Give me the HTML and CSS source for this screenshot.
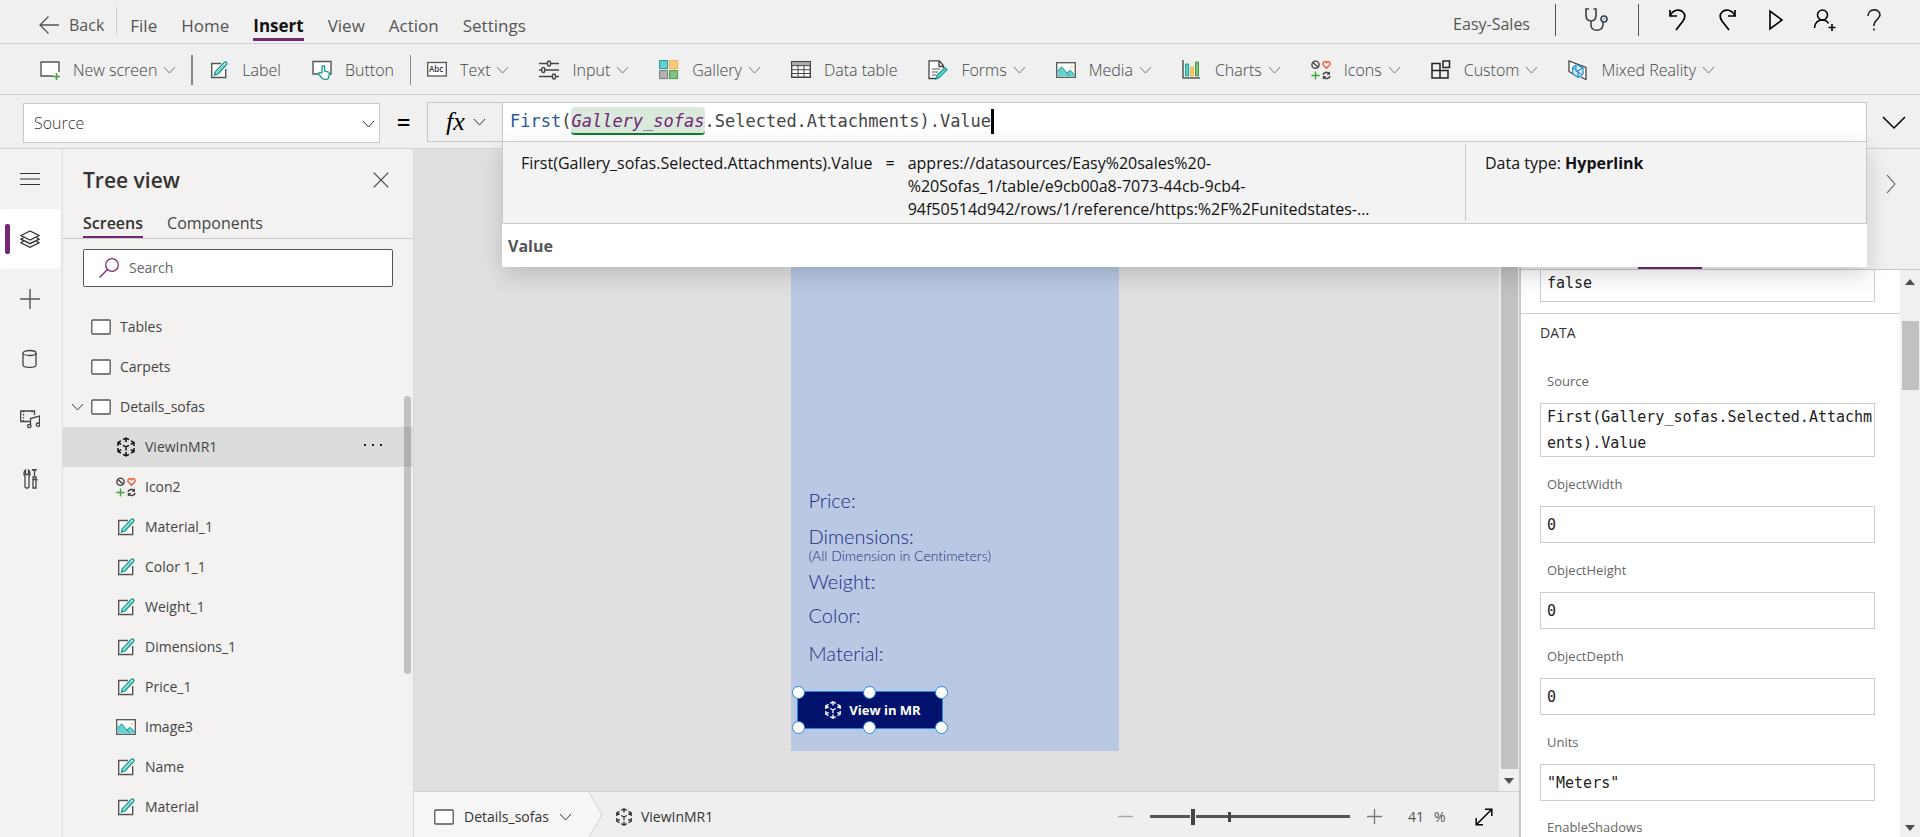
FILE: index.html
```html
<!DOCTYPE html>
<html lang="en">
<head>
<meta charset="utf-8">
<title>Easy-Sales</title>
<link rel="stylesheet" href="styles.css">
</head>
<body>
<svg class="defs" aria-hidden="true">
  <symbol id="chev" viewBox="0 0 12 8"><path d="M.5 1 6 7 11.500 1" fill="none" stroke="currentColor"/></symbol>
  <symbol id="screen" viewBox="0 0 20 16"><rect x=".8" y="1" width="18.400" height="14" rx="1" fill="#fff" stroke="#555" stroke-width="1.300"/></symbol>
  <symbol id="edit" viewBox="0 0 20 20"><path d="M12 3.500H2.700v14h14V9" fill="#fff" stroke="#555" stroke-width="1.400"/><path d="M5.500 15 6.500 11.500 15.300 2.400q1.300-1 2.200 0t0 2.200L9 13.800Z" fill="#fff" stroke="#0f9b94" stroke-width="1.400"/><path d="m7.500 13 8-8.300" stroke="#0f9b94" fill="none" stroke-width=".8"/></symbol>
  <symbol id="cube" viewBox="0 0 20 20"><path fill="none" stroke="currentColor" stroke-width="1.500" d="M7 2.700 10 1l3 1.700M10 1v4M15 3.800l3 1.700V9M18 5.500 14.800 7.300M18 11v3.500l-3 1.700M18 14.500l-3.200-1.800M13 17.300 10 19l-3-1.700M10 19v-4M5 16.200l-3-1.700V11M2 14.500l3.200-1.800M2 9V5.500l3-1.700M2 5.500 5.200 7.300M7 8.300l3 1.700 3-1.700M10 10v3.500"/></symbol>
  <symbol id="icons" viewBox="0 0 20 20"><g fill="none"><circle cx="4.500" cy="4.700" r="3.600" stroke="#444" stroke-width="1.400"/><path d="m2 2.400 5 4.700" stroke="#444" stroke-width="1.400"/><path d="M15.500 8.300 12 4.600C11.300 2 14.300.4 15.500 2.700 16.700.4 19.700 2 19 4.600Z" stroke="#f0532d" stroke-width="1.300"/><path d="M4.500 11.500v8M.3 15.500h8.400" stroke="#3fa53f" stroke-width="1.400"/><path d="M12 14.800c.6-2.600 4.500-3.400 6.300-1M19 16c-.6 2.700-4.400 3.500-6.400 1.200" stroke="#444" stroke-width="1.600"/><path d="M19 11.300v3.400h-3.400zM11.800 19.600v-3.500h3.500z" fill="#444"/></g></symbol>
  <symbol id="image" viewBox="0 0 20 16"><rect x=".7" y=".7" width="18.600" height="14.600" fill="#fff" stroke="#555" stroke-width="1.300"/><path d="M1.400 14.500V9.500L5.500 4.800l5.500 6 2.800-2.600 4.800 4.500v1.800Z" fill="#6bcfcd"/><path d="m1.400 9.500 4.100-4.700 8 9M11 11l2.800-2.800 4.800 4.500" fill="none" stroke="#129a94"/><path d="M16 4v2" stroke="#f2a93b"/></symbol>
</svg>

<header class="topbar">
  <button class="back"><svg class="i20" viewBox="0 0 20 20"><path d="M20 10H1M9.500 1.500 1 10l8.500 8.500" fill="none" stroke="currentColor" stroke-width="1.300"/></svg>Back</button>
  <nav class="menu">
    <button>File</button><button>Home</button><button class="on">Insert</button><button>View</button><button>Action</button><button>Settings</button>
  </nav>
  <div class="app">
    <span class="name">Easy-Sales</span>
    <button class="checker" aria-label="App checker"><svg viewBox="0 0 24 24"><g fill="none" stroke="#3b4049" stroke-width="1.600"><path d="M4 1H1v6c0 4 2 6 5 6s5-2 5-6V1H8.500M6 13v4c0 7 11 7 12 0v-3"/><circle cx="19" cy="11" r="3"/></g><path d="m17.800 12 2.300-2" stroke="#2b7cd3"/></svg></button>
    <button aria-label="Undo"><svg viewBox="0 0 24 24"><path d="M4 2v6h7M4 8c3-7 10-7 13-4s2 6 0 9L10 22" fill="none" stroke="#000" stroke-width="1.700"/></svg></button>
    <button aria-label="Redo"><svg viewBox="0 0 24 24"><path d="M20 2v6h-7M20 8C17 1 10 1 7 4s-2 6 0 9l7 9" fill="none" stroke="#000" stroke-width="1.700"/></svg></button>
    <button aria-label="Preview"><svg viewBox="0 0 24 24"><path d="M6 3v18L18 12Z" fill="none" stroke="#000" stroke-width="1.600"/></svg></button>
    <button aria-label="Share"><svg viewBox="0 0 24 24"><path d="M1.500 20c0-5 3.500-8 7.500-8 3 0 5.500 1.500 6.500 3.500M19 16v7M15.500 19.500h7" fill="none" stroke="#000" stroke-width="1.600"/><circle cx="9.500" cy="7" r="5" fill="none" stroke="#000" stroke-width="1.600"/></svg></button>
    <button aria-label="Help"><svg viewBox="0 0 24 24"><path d="M6 8c0-8 12-8 12-1 0 4-6 5-6 10v1M12 20.500v2" fill="none" stroke="#222" stroke-width="1.600"/></svg></button>
  </div>
</header>

<div class="ribbon">
  <button><svg class="i20" viewBox="0 0 20 20"><path d="M19 12V2H1v14h12" fill="#fff" stroke="#555" stroke-width="1.400"/><path d="M16.500 13v7M13 16.500h7" stroke="#3fa53f" stroke-width="1.500"/></svg>New screen<svg class="chev"><use href="#chev"/></svg></button>
  <i class="sep strong"></i>
  <button><svg class="i20"><use href="#edit"/></svg>Label</button>
  <button><svg class="i20" viewBox="0 0 20 20"><path d="M7 14H1V1.500h18V14h-3" fill="#fff" stroke="#555" stroke-width="1.400"/><path d="M10 13V6.500q1.400-1.500 2.700 0V11l4 1.200q.9.500.6 2l-1 4.300q-2.500 2-6 0L6.500 14q0-2 1.800-1.300Z" fill="#fff" stroke="#0f9b94" stroke-width="1.300"/></svg>Button</button>
  <i class="sep"></i>
  <button><svg class="i20" viewBox="0 0 20 20"><rect x=".7" y="2.500" width="18.600" height="13.500" fill="#fff" stroke="#555" stroke-width="1.300"/><text class="abc" x="2" y="12">Abc</text></svg>Text<svg class="chev"><use href="#chev"/></svg></button>
  <button><svg class="i20" viewBox="0 0 20 20"><g fill="none" stroke="#444" stroke-width="1.400"><path d="M0 3.500h8M12 3.500h8M0 10h2.500M6 10h14M0 16.500h13M17 16.500h3"/><rect x="8.500" y="1" width="3" height="5" rx="1.500"/><rect x="2.800" y="7.500" width="3" height="5" rx="1.500"/><rect x="13.500" y="14" width="3" height="5" rx="1.500"/></g></svg>Input<svg class="chev"><use href="#chev"/></svg></button>
  <button><svg class="i20" viewBox="0 0 20 20"><path d="M.6.6h8v8h-8z" fill="#6bcfcd" stroke="#129a94"/><path d="M10.600.6h8v8h-8z" fill="#fbcb7d" stroke="#f2b04c"/><path d="M.6 10.600h8v8h-8z" fill="#b3b3b3" stroke="#777"/><path d="M10.600 10.600h8v8h-8z" fill="#84c284" stroke="#3f9b43"/></svg>Gallery<svg class="chev"><use href="#chev"/></svg></button>
  <button><svg class="i20" viewBox="0 0 20 20"><path d="M.7 1.700h18.600v15.600H.7z" fill="#fff" stroke="#444" stroke-width="1.400"/><path d="M1 2h18v3.500H1z" fill="#aaa"/><path d="M0 5.700h20M0 9.700h20M0 13.500h20M7 5.500v12M13 5.500v12" stroke="#444"/></svg>Data table</button>
  <button><svg class="i20" viewBox="0 0 20 20"><path d="M8 18.500H1V.8h10.500l4 5V8M11 1v5.500h4.500" fill="#fff" stroke="#444" stroke-width="1.300"/><path d="M4 9h8M4 12h6M4 15h4" stroke="#555"/><path d="m8 19 1-3.800L17 7.500l2 2.300-8 8Z" fill="#6bcfcd" stroke="#0f9b94" stroke-width="1.200"/></svg>Forms<svg class="chev"><use href="#chev"/></svg></button>
  <button><svg class="i20"><use href="#image"/></svg>Media<svg class="chev"><use href="#chev"/></svg></button>
  <button><svg class="i20" viewBox="0 0 20 20"><path d="M1 0v18h17" fill="none" stroke="#555" stroke-width="1.500"/><path d="M3.600 4h3v12h-3z" fill="#6bcfcd" stroke="#0f9b94"/><path d="M8.500 7h3v9h-3z" fill="#fbcb7d" stroke="#f2b04c"/><path d="M13.500 2h3v14h-3z" fill="#84c284" stroke="#3f9b43"/></svg>Charts<svg class="chev"><use href="#chev"/></svg></button>
  <button><svg class="i20"><use href="#icons"/></svg>Icons<svg class="chev"><use href="#chev"/></svg></button>
  <button><svg class="i20" viewBox="0 0 20 20"><path d="M1 3.500h8V18H1zM1 10.500h16V18H1M17 10.500V18M12 1h6.500v6.500H12z" fill="none" stroke="#222" stroke-width="1.500"/></svg>Custom<svg class="chev"><use href="#chev"/></svg></button>
  <button><svg class="i20" viewBox="0 0 20 20"><path d="M5 14 1 11.500V1l17 6.500v12L13 17" fill="#fff" stroke="#444" stroke-width="1.300"/><path d="m4.500 8 4-3.500L15 8v6l-4.500 3.500L5 14ZM5 8l5 3v6M10 11l4.500-3M8 6v5l5 3" fill="#d9ecfa" stroke="#2f8fd0" stroke-width="1.300"/></svg>Mixed Reality<svg class="chev"><use href="#chev"/></svg></button>
</div>

<div class="formula">
  <div class="prop"><select aria-label="Property"><option>Source</option></select><svg class="chev"><use href="#chev"/></svg></div>
  <span class="eq">=</span>
  <button class="fx" aria-label="Function"><span>fx</span><svg class="chev"><use href="#chev"/></svg></button>
  <div class="editor">
    <div class="code" role="textbox" aria-label="Formula"><span class="fn">First</span>(<span class="ref">Gallery_sofas</span>.Selected.Attachments).Value<i class="caret"></i></div>
    <div class="pop">
      <div class="result">
        <div class="expr"><span>First(Gallery_sofas.Selected.Attachments).Value</span><span>=</span><span class="val">appres://datasources/Easy%20sales%20-<br>%20Sofas_1/table/e9cb00a8-7073-44cb-9cb4-<br>94f50514d942/rows/1/reference/https:%2F%2Funitedstates-...</span></div>
        <div class="type">Data type: <b>Hyperlink</b></div>
      </div>
      <button class="suggest">Value</button>
    </div>
  </div>
  <button class="expand" aria-label="Expand formula bar"><svg viewBox="0 0 24 14"><path d="m1 1 11 11L23 1" fill="none" stroke="#000" stroke-width="1.500"/></svg></button>
</div>

<main class="work">
  <nav class="rail">
    <button aria-label="Menu"><svg viewBox="0 0 20 20"><path d="M0 4.500h20M0 10h20M0 15.500h20" stroke="#333" stroke-width="1.200"/></svg></button>
    <button class="on" aria-label="Tree view"><svg viewBox="0 0 20 20"><g fill="none" stroke="#333" stroke-width="1.300"><path d="m1 6.500 9-4.500 9 4.500-9 4.500Z"/><path d="M3.500 8.500 1 10.200l9 4.500 9-4.500-2.500-1.700M3.500 12 1 13.800l9 4.500 9-4.500-2.500-1.800"/></g></svg></button>
    <button aria-label="Insert"><svg viewBox="0 0 20 20"><path d="M0 10h20M10 0v20" stroke="#555" stroke-width="1.400"/></svg></button>
    <button aria-label="Data"><svg viewBox="0 0 20 20"><path d="M3 4v12c0 3.200 13 3.200 13 0V4" fill="none" stroke="#444" stroke-width="1.300"/><ellipse cx="9.500" cy="4" rx="6.500" ry="2.500" fill="none" stroke="#444" stroke-width="1.300"/></svg></button>
    <button aria-label="Media"><svg viewBox="0 0 20 20"><g fill="none" stroke="#444" stroke-width="1.300"><path d="M14.500 6V2H.7v10.500h9M10.500 17V9.500L19.500 7v8.500"/><circle cx="9.300" cy="17" r="1.700"/><circle cx="18" cy="15.700" r="1.700"/><path d="M3.500 2v10M12 2v3" stroke-dasharray="1.500 1.500"/></g></svg></button>
    <button aria-label="Advanced tools"><svg viewBox="0 0 20 20"><g fill="none" stroke="#444" stroke-width="1.300"><path d="M5.500 1v4.500h3V1c2 1.500 2 5 .5 6.500V18q-2 2.500-4 0V7.500C3.500 6 3.500 2.500 5.500 1ZM14.500 7V1h-2v-.4h3.500V1h-1M12.500 10.500h5M13 8h3v11h-3z"/></g></svg></button>
  </nav>

  <aside class="tree">
    <div class="head"><h1>Tree view</h1><button aria-label="Close"><svg viewBox="0 0 16 16"><path d="m.7.7 14.600 14.600M15.300.7.700 15.300" stroke="#444" stroke-width="1.200"/></svg></button></div>
    <div class="tabs"><button class="on">Screens</button><button>Components</button></div>
    <label class="search"><svg viewBox="0 0 20 20"><circle cx="13" cy="7" r="6.300" fill="none" stroke="#742774" stroke-width="1.200"/><path d="M8.500 11.500.5 19.500" stroke="#742774" stroke-width="1.300"/></svg><input type="search" placeholder="Search" aria-label="Search"></label>
    <ul class="items">
      <li><span class="tw"></span><svg class="sc"><use href="#screen"/></svg>Tables</li>
      <li><span class="tw"></span><svg class="sc"><use href="#screen"/></svg>Carpets</li>
      <li><span class="tw"><svg class="chev"><use href="#chev"/></svg></span><svg class="sc"><use href="#screen"/></svg>Details_sofas</li>
      <li class="kid sel"><svg class="i20"><use href="#cube"/></svg>ViewInMR1<button class="more" aria-label="More"><svg viewBox="0 0 20 4"><path d="M1 1h2v2H1zM9 1h2v2H9zM17 1h2v2h-2z" fill="#222"/></svg></button></li>
      <li class="kid"><svg class="i20"><use href="#icons"/></svg>Icon2</li>
      <li class="kid"><svg class="i20"><use href="#edit"/></svg>Material_1</li>
      <li class="kid"><svg class="i20"><use href="#edit"/></svg>Color 1_1</li>
      <li class="kid"><svg class="i20"><use href="#edit"/></svg>Weight_1</li>
      <li class="kid"><svg class="i20"><use href="#edit"/></svg>Dimensions_1</li>
      <li class="kid"><svg class="i20"><use href="#edit"/></svg>Price_1</li>
      <li class="kid"><svg class="i20"><use href="#image"/></svg>Image3</li>
      <li class="kid"><svg class="i20"><use href="#edit"/></svg>Name</li>
      <li class="kid"><svg class="i20"><use href="#edit"/></svg>Material</li>
    </ul>
    <i class="thumb"></i>
  </aside>

  <section class="stage">
    <div class="viewport">
      <div class="canvas">
        <div class="phone">
          <p class="f price">Price:</p>
          <p class="f dims">Dimensions:</p>
          <p class="f note">(All Dimension in Centimeters)</p>
          <p class="f weight">Weight:</p>
          <p class="f color">Color:</p>
          <p class="f material">Material:</p>
          <div class="selbox">
            <button><svg class="i18"><use href="#cube"/></svg>View in MR</button>
            <i class="h tl"></i><i class="h tc"></i><i class="h tr"></i><i class="h bl"></i><i class="h bc"></i><i class="h br"></i>
          </div>
        </div>
      </div>
      <div class="vbar"><i class="bar"></i><svg viewBox="0 0 10 6"><path d="M0 0h10L5 6Z" fill="#505050"/></svg></div>
    </div>
    <footer class="status">
      <button class="crumb"><svg class="sc"><use href="#screen"/></svg>Details_sofas<svg class="chev"><use href="#chev"/></svg></button>
      <svg class="arrow" viewBox="0 0 14 45" preserveAspectRatio="none"><path d="M0 0 13 23 0 45Z" fill="#f6f6f6"/><path d="M0 0 13 23 0 45" fill="none" stroke="#d0d0d0"/></svg>
      <span class="cur"><svg class="i18"><use href="#cube"/></svg>ViewInMR1</span>
      <div class="zoom">
        <button aria-label="Zoom out"><svg viewBox="0 0 15 15"><path d="M0 7.500h15" stroke="#aaa" stroke-width="1.500"/></svg></button>
        <input type="range" min="0" max="100" value="21" aria-label="Zoom">
        <button aria-label="Zoom in"><svg viewBox="0 0 15 15"><path d="M0 7.500h15M7.500 0v15" stroke="#777" stroke-width="1.300"/></svg></button>
        <span class="pct"><span>41</span><span>%</span></span>
        <button aria-label="Fit"><svg class="i18" viewBox="0 0 18 18"><path d="m1.500 16.500 15-15M10 1.200h6.800V8M1.200 10v6.800H8" fill="none" stroke="#000" stroke-width="1.500"/></svg></button>
      </div>
    </footer>
  </section>

  <aside class="panel">
    <div class="phead"><button aria-label="Collapse"><svg viewBox="0 0 10 20"><path d="m1 1 8 9-8 9" fill="none" stroke="#777" stroke-width="1.200"/></svg></button><i class="ink"></i></div>
    <div class="pbody">
      <div class="fields">
        <input class="cut" value="false" aria-label="Previous property">
        <h2>DATA</h2>
        <label for="p1">Source</label><textarea id="p1" rows="2">First(Gallery_sofas.Selected.Attachments).Value</textarea>
        <label for="p2">ObjectWidth</label><input id="p2" value="0">
        <label for="p3">ObjectHeight</label><input id="p3" value="0">
        <label for="p4">ObjectDepth</label><input id="p4" value="0">
        <label for="p5">Units</label><input id="p5" value="&quot;Meters&quot;">
        <label for="p6">EnableShadows</label>
      </div>
      <div class="pbar"><svg viewBox="0 0 10 6"><path d="M0 6h10L5 0Z" fill="#505050"/></svg><i class="bar"></i><svg viewBox="0 0 10 6"><path d="M0 0h10L5 6Z" fill="#505050"/></svg></div>
    </div>
  </aside>
</main>
</body>
</html>
```
FILE: styles.css
```css
* { box-sizing: border-box; }
body { margin: 0; height: 100vh; display: flex; flex-direction: column; overflow: hidden; background: #f0f0f0; color: #333; font: 14px/20px "Open Sans", "Noto Sans", sans-serif; }
button { background: none; border: 0; padding: 0; margin: 0; font: inherit; color: inherit; display: flex; align-items: center; }
svg { display: block; flex: none; }
i { display: block; }
.defs { position: absolute; width: 0; height: 0; }
.i20 { width: 20px; height: 20px; }
.i18 { width: 18px; height: 18px; }
.sc { width: 20px; height: 16px; }
.chev { width: 13px; height: 8px; }

.topbar { flex: none; display: flex; height: 44px; border-bottom: 1px solid #d0d0d0; color: #555; font-size: 16px; padding-left: 39px; }
.back { gap: 10px; height: 27px; margin-top: 7px; padding: 8px 12px 0 0; border-right: 1px solid #ccc; }
.menu { display: flex; gap: 24px; padding: 9px 0 2px 13px; font-size: 17px; }
.menu button { border-bottom: 3px solid transparent; border-top: 4px solid transparent; }
.menu .on { color: #111; font-weight: 700; border-bottom-color: #742774; }
.app { margin-left: auto; display: flex; align-items: center; padding-right: 34px; gap: 25px; height: 40px; }
.app svg { width: 24px; height: 24px; }
.app .name { padding-top: 7px; }
.app .checker { border: solid #555; border-width: 0 1px; height: 32px; padding: 0 29px; margin-right: 2px; }

.ribbon { flex: none; display: flex; align-items: center; height: 51px; border-bottom: 1px solid #d0d0d0; padding: 2px 0 0 40px; gap: 31px; color: #444; font-size: 16px; font-weight: 300; }
.ribbon button { gap: 13px; white-space: nowrap; }
.ribbon .chev { margin-left: -7px; margin-right: -1px; color: #777; }
.ribbon .sep { width: 1px; height: 30px; background: #888; margin: 0 -15px; }
.ribbon .strong { width: 2px; }
.abc { font: 600 8px "Open Sans", sans-serif; fill: #333; }

.formula { flex: none; display: flex; height: 54px; border-bottom: 1px solid #d0d0d0; padding: 7px 0 6px 23px; }
.prop { position: relative; width: 357px; height: 40px; margin-top: 1px; }
.prop select { width: 100%; height: 100%; appearance: none; background: #fff; border: 1px solid #c8c8c8; border-radius: 0; padding: 0 10px; font: 300 16px "Open Sans", sans-serif; color: #333; }
.prop .chev { position: absolute; right: 5px; top: 17px; pointer-events: none; }
.eq { width: 47px; text-align: center; font-size: 24px; line-height: 40px; font-weight: 600; color: #000; }
.fx { width: 75px; height: 40px; border: 1px solid #c8c8c8; border-right: 0; padding-left: 18px; gap: 8px; }
.fx span { font: italic 26px "Liberation Serif", serif; color: #000; }
.editor { position: relative; flex: 1; height: 40px; background: #fff; border: 1px solid #c8c8c8; z-index: 5; }
.code { display: flex; align-items: center; height: 36px; padding-left: 7px; font: 17px/24px "DejaVu Sans Mono", monospace; color: #444; }
.code .fn { color: #2b579a; }
.code .ref { font-style: italic; color: #742774; background: #d9eadd; border-bottom: 2px solid #107c28; border-radius: 4px; height: 28px; line-height: 28px; }
.caret { width: 3px; height: 25px; background: #000; }
.pop { position: absolute; left: -1px; right: -1px; top: 38px; box-shadow: 0 8px 22px rgba(0,0,0,.16); }
.result { display: flex; height: 83px; background: #f3f3f3; border: 1px solid #c8c8c8; color: #111; font-size: 16px; line-height: 23px; padding: 2px 0; }
.expr { flex: 1; display: flex; gap: 13px; padding: 8px 0 0 18px; white-space: nowrap; overflow: hidden; }
.type { width: 401px; border-left: 1px solid #c8c8c8; padding: 8px 0 0 19px; }
.suggest { width: 100%; height: 43px; background: #fff; padding-left: 6px; font-size: 16px; font-weight: 700; color: #555; }
.expand { width: 53px; justify-content: center; margin-top: 1px; }
.expand svg { width: 24px; height: 14px; }

.work { flex: 1; min-height: 0; display: flex; }
.rail { width: 63px; background: #f3f2f1; border-right: 1px solid #e0dfde; }
.rail button { width: 60px; height: 60px; justify-content: center; position: relative; border-radius: 3px; }
.rail svg { width: 20px; height: 20px; }
.rail .on { background: #fff; }
.rail .on::before { content: ""; position: absolute; left: 5px; top: 15px; width: 5px; height: 30px; border-radius: 2px; background: #742774; }

.tree { position: relative; width: 351px; background: #f3f2f1; border-right: 1px solid #d8d7d6; color: #444; overflow: hidden; }
.head { display: flex; justify-content: space-between; align-items: center; height: 60px; padding: 1px 24px 0 20px; }
.head h1 { margin: 0; font-size: 21px; line-height: 28px; font-weight: 600; color: #333; }
.head svg { width: 16px; height: 16px; }
.tabs { display: flex; gap: 24px; height: 30px; padding-left: 20px; border-bottom: 1px solid #c8c8c8; font-size: 16px; }
.tabs button { border: solid transparent; border-width: 0 0 2px; padding-bottom: 0; }
.tabs .on { font-weight: 600; border-color: #742774; color: #333; }
.search { display: flex; align-items: center; gap: 10px; margin: 10px 20px 20px; height: 38px; padding-left: 15px; background: #fff; border: 1px solid #555; border-radius: 2px; }
.search svg { width: 20px; height: 20px; }
.search input { flex: 1; min-width: 0; border: 0; outline: 0; background: none; padding: 0; font: inherit; }
.search input::placeholder { color: #666; }
.items { list-style: none; margin: 0; padding: 0; }
.items li { display: flex; align-items: center; height: 40px; gap: 9px; }
.items .tw { width: 19px; padding-left: 8px; }
.items .kid { padding-left: 53px; }
.items .sel { background: #dcdcdc; }
.items .sel svg { color: #111; }
.more { margin-left: auto; padding: 0 30px 4px 0; }
.more svg { width: 20px; height: 4px; }
.thumb { position: absolute; right: 2px; top: 247px; width: 7px; height: 278px; border-radius: 4px; background: rgba(0,0,0,.2); }

.stage { flex: 1; min-width: 0; display: flex; flex-direction: column; }
.viewport { flex: 1; min-height: 0; display: flex; background: #e0e0e0; }
.canvas { flex: 1; overflow: hidden; display: flex; justify-content: center; align-items: flex-start; }
.phone { position: relative; width: 328px; height: 602px; background: #b9c9e3; margin-right: 4px; color: #1d2b83; font-family: Lato, sans-serif; font-variant-ligatures: none; }
.f { position: absolute; left: 18px; margin: 0; font-size: 20px; line-height: 26px; font-weight: 300; white-space: nowrap; }
.price { top: 338px; }
.dims { top: 374px; }
.note { top: 394px; font-size: 14px; }
.weight { top: 419px; }
.color { top: 453px; }
.material { top: 491px; }
.selbox { position: absolute; left: 6px; top: 542px; width: 146px; height: 38px; border: 1px solid #2b88d8; }
.selbox button { width: 100%; height: 100%; justify-content: center; gap: 7px; padding: 0 0 0 6px; background: #00126b; color: #fff; font: 700 13px "Open Sans", sans-serif; }
.h { position: absolute; width: 13px; height: 13px; border-radius: 50%; background: #fff; border: 1px solid #2b88d8; }
.tl, .tc, .tr { top: -6px; }
.bl, .bc, .br { bottom: -6px; }
.tl, .bl { left: -6px; }
.tc, .bc { left: 65px; }
.tr, .br { right: -6px; }
.vbar { width: 20px; background: #f0f0f0; display: flex; flex-direction: column; align-items: center; padding-bottom: 7px; }
.vbar .bar { flex: 1; width: 17px; background: #c1c1c1; margin-bottom: 9px; }
.vbar svg, .pbar svg { width: 10px; height: 6px; }
.status { flex: none; display: flex; height: 46px; border-top: 1px solid #d0d0d0; background: #efefef; }
.crumb { background: #f6f6f6; padding: 4px 17px 0 20px; gap: 10px; }
.crumb, .cur { color: #333; }
.arrow { width: 14px; height: 45px; }
.cur { display: flex; align-items: center; gap: 8px; padding: 4px 0 0 12px; }
.zoom { margin-left: auto; display: flex; align-items: center; gap: 17px; padding: 4px 26px 0 0; color: #555; }
.zoom button svg { width: 15px; height: 15px; }
.zoom button .i18 { width: 18px; height: 18px; }
.pct { display: flex; gap: 10px; width: 59px; padding-left: 9px; }
.zoom input { appearance: none; width: 200px; height: 20px; margin: 0; background: linear-gradient(#444,#444) 78px 50%/3px 10px no-repeat, linear-gradient(#555,#555) 0 50%/100% 3px no-repeat; }
.zoom input::-webkit-slider-thumb { appearance: none; width: 4px; height: 16px; background: #444; box-shadow: 0 0 0 1px #efefef; }

.panel { width: 401px; display: flex; flex-direction: column; border-left: 2px solid #c8c8c8; background: #fff; }
.phead { position: relative; flex: none; height: 121px; background: #f0f0f0; border-bottom: 1px solid #c8c8c8; }
.phead button { margin: 25px 24px 0 auto; }
.phead svg { width: 10px; height: 20px; }
.ink { position: absolute; left: 117px; bottom: 0; width: 64px; height: 3px; background: #742774; }
.pbody { flex: 1; min-height: 0; display: flex; }
.fields { flex: 1; overflow: hidden; padding: 0 25px 0 19px; }
.fields input, .fields textarea { display: block; width: 100%; height: 37px; border: 1px solid #ccc; border-radius: 0; background: #fff; padding: 0 6px; margin: 0; font: 15px/26px "DejaVu Sans Mono", monospace; color: #222; }
.fields textarea { height: 54px; padding: 0 0 0 6px; resize: none; overflow: hidden; word-break: break-all; }
.fields .cut { height: 32px; border-top: 0; padding-bottom: 6px; }
.fields h2 { margin: 11px -25px 0 -19px; padding: 9px 0 5px 19px; border-top: 1px solid #ccc; font-size: 14px; font-weight: 500; line-height: 20px; color: #333; }
.fields label { display: block; height: 49px; padding: 18px 0 0 7px; font-size: 13px; line-height: 18px; color: #666; }
.fields h2 + label { height: 55px; padding-top: 24px; }
.fields label:last-child { height: 37px; padding-top: 17px; }
.pbar { width: 20px; background: #f0f0f0; display: flex; flex-direction: column; align-items: center; padding: 9px 0 6px; }
.pbar .bar { width: 17px; height: 69px; background: #c1c1c1; margin: 36px 0 auto; }
```
